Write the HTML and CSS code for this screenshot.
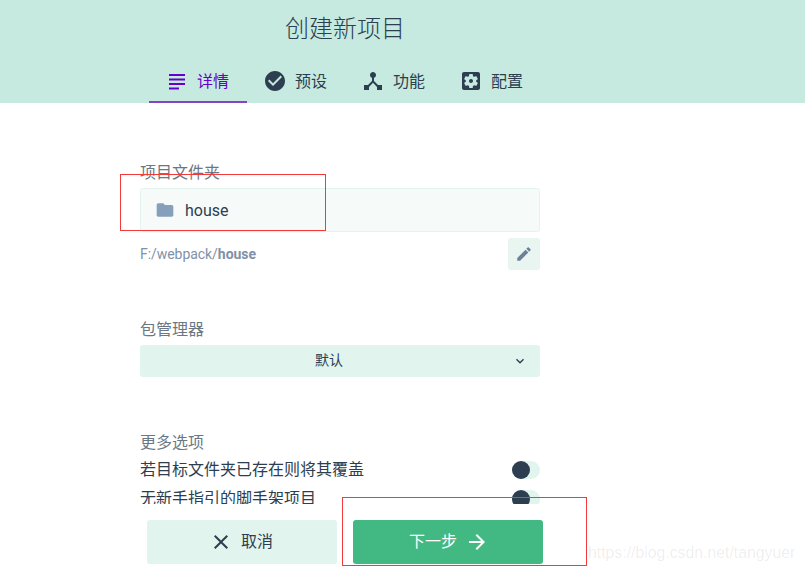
FILE: index.html
```html
<!DOCTYPE html>
<html lang="zh">
<head>
    <meta charset="UTF-8">
    <title>创建新项目</title>
    <link rel="stylesheet" href="styles.css">
</head>
<body>
    <header class="header">
        <h1 class="title">创建新项目</h1>
        <nav class="tabs">
            <a class="tab tab-active">
                <svg class="icon" viewBox="0 0 24 24"><path d="M4 5h16v2H4zM4 9.500h16v2H4zM4 14h16v2H4zM4 18.500h10v2H4z"/></svg>
                <span class="tab-text">详情</span>
            </a>
            <a class="tab">
                <svg class="icon" viewBox="0 0 24 24"><path d="M12 2C6.48 2 2 6.48 2 12s4.480 10 10 10 10-4.480 10-10S17.520 2 12 2zm-2 15l-5-5 1.410-1.410L10 14.170l7.590-7.590L19 8l-9 9z"/></svg>
                <span class="tab-text">预设</span>
            </a>
            <a class="tab">
                <svg class="icon" viewBox="0 0 24 24"><path d="M17 16l-4-4V8.820C14.160 8.400 15 7.300 15 6c0-1.660-1.340-3-3-3S9 4.340 9 6c0 1.300.840 2.400 2 2.820V12l-4 4H3v5h5v-3.050l4-4.200 4 4.200V21h5v-5h-4z"/></svg>
                <span class="tab-text">功能</span>
            </a>
            <a class="tab">
                <svg class="icon" viewBox="0 0 24 24"><path d="M12 10c-1.100 0-2 .9-2 2s.9 2 2 2 2-.9 2-2-.9-2-2-2zm7-7H5c-1.110 0-2 .9-2 2v14c0 1.100.89 2 2 2h14c1.100 0 2-.9 2-2V5c0-1.100-.9-2-2-2zm-1.750 9c0 .23-.02.46-.05.68l1.480 1.160c.13.11.17.3.08.45l-1.400 2.420c-.09.15-.27.21-.43.15l-1.740-.7c-.36.28-.76.51-1.180.69l-.26 1.850c-.03.17-.18.3-.35.3h-2.800c-.17 0-.32-.13-.35-.29l-.26-1.850c-.43-.18-.82-.41-1.180-.69l-1.740.7c-.16.06-.34 0-.43-.15l-1.400-2.420c-.09-.15-.05-.34.08-.45l1.480-1.160c-.03-.23-.05-.46-.05-.69 0-.23.02-.46.05-.68l-1.480-1.160c-.13-.11-.17-.3-.08-.45l1.400-2.420c.09-.15.27-.21.43-.15l1.740.7c.36-.28.76-.51 1.180-.69l.26-1.850c.03-.17.18-.3.35-.3h2.800c.17 0 .32.13.35.29l.26 1.850c.43.18.82.41 1.180.69l1.740-.7c.16-.06.34 0 .43.15l1.400 2.420c.09.15.05.34-.08.45l-1.480 1.160c.03.23.05.46.05.69z"/></svg>
                <span class="tab-text">配置</span>
            </a>
        </nav>
    </header>

    <main class="content">
        <div class="form-group">
            <div class="form-label">项目文件夹</div>
            <div class="folder-input">
                <svg class="folder-icon" viewBox="0 0 24 24"><path d="M10 4H4c-1.100 0-1.990.9-1.990 2L2 18c0 1.100.9 2 2 2h16c1.100 0 2-.9 2-2V8c0-1.100-.9-2-2-2h-8l-2-2z"/></svg>
                <span>house</span>
            </div>
            <div class="path-row">
                <span class="path">F:/webpack/<b>house</b></span>
                <button class="edit-btn">
                    <svg class="edit-icon" viewBox="0 0 24 24"><path d="M3 17.250V21h3.750L17.810 9.940l-3.750-3.750L3 17.250zM20.710 7.040c.39-.39.39-1.020 0-1.410l-2.340-2.340c-.39-.39-1.020-.39-1.410 0l-1.830 1.830 3.750 3.750 1.830-1.830z"/></svg>
                </button>
            </div>
        </div>

        <div class="form-group group-manager">
            <div class="form-label">包管理器</div>
            <div class="select">
                <span class="raised">默认</span>
                <svg class="chevron" viewBox="0 0 24 24"><path d="M7.410 8.590L12 13.170l4.590-4.580L18 10l-6 6-6-6 1.410-1.410z"/></svg>
            </div>
        </div>

        <div class="form-group group-more">
            <div class="form-label label-more">更多选项</div>
            <div class="option">
                <span class="raised">若目标文件夹已存在则将其覆盖</span>
                <span class="toggle"><span class="knob"></span></span>
            </div>
            <div class="option">
                <span class="raised">无新手指引的脚手架项目</span>
                <span class="toggle"><span class="knob"></span></span>
            </div>
        </div>
    </main>

    <footer class="footer">
        <button class="btn btn-cancel">
            <svg class="btn-icon" viewBox="0 0 24 24"><path d="M19 6.410L17.590 5 12 10.590 6.410 5 5 6.410 10.590 12 5 17.590 6.410 19 12 13.410 17.590 19 19 17.590 13.410 12z"/></svg>
            <span class="raised">取消</span>
        </button>
        <button class="btn btn-next">
            <span class="raised">下一步</span>
            <svg class="btn-icon" viewBox="0 0 24 24"><path d="M12 4l-1.410 1.410L16.170 11H4v2h12.170l-5.580 5.590L12 20l8-8z"/></svg>
        </button>
    </footer>

    <!-- red boxes drawn over the screenshot, and the blog watermark -->
    <div class="mark mark-folder"></div>
    <div class="mark mark-next"></div>
    <div class="watermark">https://blog.csdn.net/tangyuer</div>
</body>
</html>
```

FILE: styles.css
```css
* {
    box-sizing: border-box;
}

body {
    margin: 0;
    height: 571px;
    overflow: hidden;
    position: relative;
    background-color: white;
    color: #2c3e50;
    font-family: Roboto, "Noto Sans CJK SC", sans-serif;
    font-size: 16px;
}

.header {
    height: 103px;
    background-color: #c6eadf;
}

.title {
    margin: 0;
    width: 690px;
    height: 56px;
    line-height: 58px;
    text-align: center;
    font-size: 24px;
    font-weight: 300;
}

.tabs {
    display: flex;
    padding-left: 149px;
}

.tab {
    width: 98px;
    height: 47px;
    padding: 5px 0 0 16px;
    display: flex;
    align-items: center;
    gap: 8px;
    font-size: 16px;
    border-bottom: 2px solid transparent;
}

.tab-text {
    padding-bottom: 2px;
}

.tab-active {
    color: #6600cc;
    border-bottom-color: #8544c4;
}

.icon {
    width: 24px;
    height: 24px;
    fill: currentColor;
}

.content {
    height: 401px;
    overflow: hidden;
    padding: 59px 0 0 140px;
    width: 540px;
}

.form-label {
    height: 22px;
    line-height: 22px;
    margin-bottom: 4px;
    color: #6a7885;
}

.folder-input {
    height: 44px;
    display: flex;
    align-items: center;
    gap: 10px;
    padding-left: 14px;
    background-color: #f6fbf9;
    border: 1px solid #e2f4ee;
    border-radius: 3px;
}

.folder-icon {
    width: 20px;
    height: 20px;
    fill: #86a0bb;
}

.path-row {
    margin-top: 6px;
    display: flex;
    align-items: center;
    justify-content: space-between;
}

.path {
    font-size: 14px;
    letter-spacing: -0.05px;
    color: #7f91a8;
}

.edit-btn {
    width: 32px;
    height: 32px;
    padding: 0;
    border: none;
    border-radius: 3px;
    background-color: #e9f5f1;
    display: flex;
    align-items: center;
    justify-content: center;
}

.edit-icon {
    width: 18px;
    height: 18px;
    fill: #6c8099;
}

.group-manager {
    margin-top: 49px;
}

.select {
    height: 32px;
    padding: 0 12px 0 175px;
    display: flex;
    align-items: center;
    justify-content: space-between;
    background-color: #e2f4ee;
    border-radius: 3px;
    font-size: 14px;
}

/* CJK text sits low in its line box, this lifts it to the row's middle */
.raised {
    padding-bottom: 4px;
}

.chevron {
    width: 16px;
    height: 16px;
    fill: #2c3e50;
}

.group-more {
    margin-top: 55px;
}

.label-more {
    margin-bottom: 1px;
}

.option {
    height: 29px;
    display: flex;
    align-items: center;
    justify-content: space-between;
}

.toggle {
    width: 28px;
    height: 18px;
    border-radius: 9px;
    background-color: #e2f4ee;
}

.knob {
    display: block;
    width: 18px;
    height: 18px;
    border-radius: 50%;
    background-color: #2c3e50;
}

.footer {
    height: 67px;
    padding: 16px 0 0 147px;
    display: flex;
    gap: 16px;
}

.btn {
    width: 190px;
    height: 44px;
    border: none;
    border-radius: 3px;
    display: flex;
    align-items: center;
    justify-content: center;
    gap: 8px;
    font-family: inherit;
    font-size: 16px;
}

.btn-cancel {
    padding: 0 8px 0 6px;
    background-color: #e2f4ee;
    color: #2c3e50;
}

.btn-next {
    padding-left: 8px;
    background-color: #42b983;
    color: white;
}

.btn-icon {
    width: 24px;
    height: 24px;
    fill: currentColor;
}

.mark {
    position: absolute;
    border: 1px solid #f33a3a;
}

.mark-folder {
    left: 120px;
    top: 174px;
    width: 206px;
    height: 57px;
}

.mark-next {
    left: 342px;
    top: 497px;
    width: 245px;
    height: 69px;
}

.watermark {
    position: absolute;
    left: 588px;
    top: 544px;
    font-family: "Liberation Sans", sans-serif;
    font-size: 15.800px;
    color: rgba(0, 0, 0, 0.08);
}
```
